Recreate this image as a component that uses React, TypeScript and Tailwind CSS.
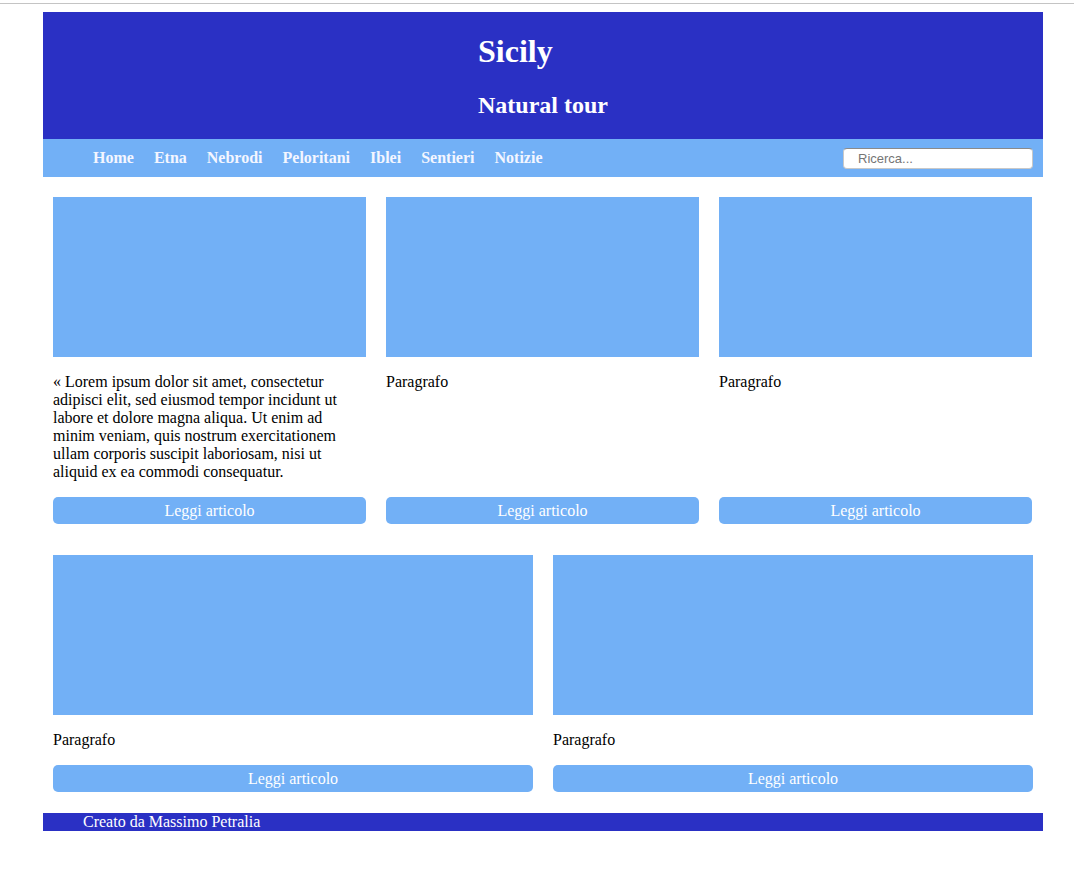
import React from "react";

const lorem =
  "« Lorem ipsum dolor sit amet, consectetur adipisci elit, sed eiusmod tempor incidunt ut labore et dolore magna aliqua. Ut enim ad minim veniam, quis nostrum exercitationem ullam corporis suscipit laboriosam, nisi ut aliquid ex ea commodi consequatur.";

const links = ["Home", "Etna", "Nebrodi", "Peloritani", "Iblei", "Sentieri", "Notizie"];

const Card = ({ text }: { text: string }) => (
  <div className="flex flex-col">
    <div className="h-[160px] bg-[#72b0f6]" />
    <p className="mt-[16px] text-[16px] leading-[18px] text-black flex-1">{text}</p>
    <button className="mt-[16px] h-[27px] rounded-[5px] bg-[#72b0f6] text-white text-[16px] leading-[27px]">
      Leggi articolo
    </button>
  </div>
);

const App = () => {
  return (
    <div className="min-h-[889px] bg-white" style={{ fontFamily: '"Liberation Serif", serif' }}>
      <div className="pt-[3px]">
        <div className="h-px bg-[#c4c4c4]" />
      </div>
      <div className="ml-[43px] mt-[8px] w-[1000px]">
        <header className="bg-[#2a30c4] pl-[435px] pt-[21px] pb-[20px] text-white">
          <h1 className="text-[32px] leading-[37px] font-bold">Sicily</h1>
          <h2 className="mt-[21px] text-[24px] leading-[28px] font-bold">Natural tour</h2>
        </header>
        <nav className="flex h-[38px] items-center justify-between bg-[#72b0f6] pl-[50px] pr-[10px]">
          <ul className="flex gap-[20px]">
            {links.map((l) => (
              <li key={l}>
                <a href="#" className="text-[16px] font-bold text-[#f4f6ff]">
                  {l}
                </a>
              </li>
            ))}
          </ul>
          <input
            type="text"
            placeholder="Ricerca..."
            className="h-[21px] w-[190px] rounded-[4px] border border-[#c8c8c8] border-t-[#8a8a8a] bg-white pl-[14px] text-[13px] placeholder:text-[#757575] focus:outline-none"
            style={{ fontFamily: '"Liberation Sans", sans-serif' }}
          />
        </nav>
        <main className="px-[10px] pt-[20px] pb-[21px]">
          <div className="grid grid-cols-[313px_313px_313px] gap-x-[20px]">
            <Card text={lorem} />
            <Card text="Paragrafo" />
            <Card text="Paragrafo" />
          </div>
          <div className="mt-[31px] grid grid-cols-[480px_480px] gap-x-[20px]">
            <Card text="Paragrafo" />
            <Card text="Paragrafo" />
          </div>
        </main>
        <footer className="h-[18px] bg-[#2a30c4] pl-[40px] text-[16px] leading-[18px] text-white">
          Creato da Massimo Petralia
        </footer>
      </div>
    </div>
  );
};

export default App;
